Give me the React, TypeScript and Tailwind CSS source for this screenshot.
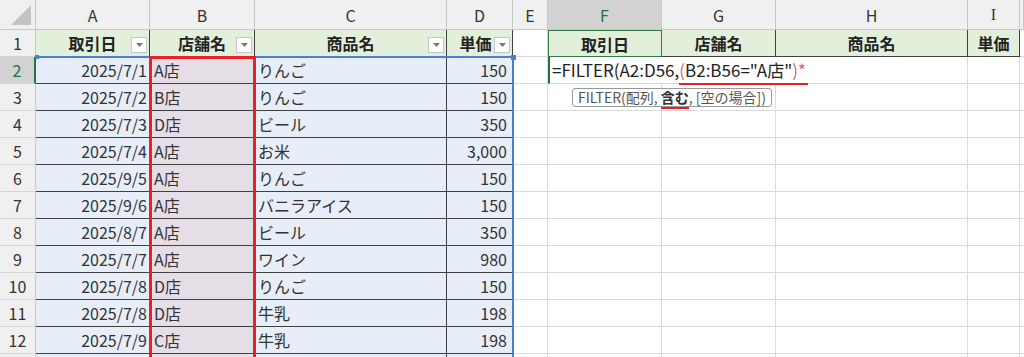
import React from 'react';

// Excel-like sheet: table A:D with a FILTER formula being typed in F2

const ROWS: [string, string, string, string][] = [
  ['2025/7/1', 'A店', 'りんご', '150'],
  ['2025/7/2', 'B店', 'りんご', '150'],
  ['2025/7/3', 'D店', 'ビール', '350'],
  ['2025/7/4', 'A店', 'お米', '3,000'],
  ['2025/9/5', 'A店', 'りんご', '150'],
  ['2025/9/6', 'A店', 'バニラアイス', '150'],
  ['2025/8/7', 'A店', 'ビール', '350'],
  ['2025/7/7', 'A店', 'ワイン', '980'],
  ['2025/7/8', 'D店', 'りんご', '150'],
  ['2025/7/8', 'D店', '牛乳', '198'],
  ['2025/7/9', 'C店', '牛乳', '198'],
  ['', '', '', ''],
];

const COLS = ['A', 'B', 'C', 'D', 'E', 'F', 'G', 'H', 'I', ''];

function FilterBtn() {
  return (
    <span className="absolute right-[2px] bottom-[3px] flex h-[16px] w-[16px] items-center justify-center border border-[#c6c6c6] bg-white">
      <svg width="7" height="4" viewBox="0 0 7 4">
        <path d="M0 0h7L3.5 4z" fill="#777" />
      </svg>
    </span>
  );
}

function RowHead({ n, active }: { n: number; active?: boolean }) {
  return (
    <div
      className={
        'flex h-[27px] items-center justify-center border-b border-[#d4d4d4] text-[16px] ' +
        (active
          ? 'bg-[#d2d2d2] text-[#217346] border-r-2 border-r-[#217346]'
          : 'bg-[#f0f0f0] text-[#333] border-r border-r-[#c8c8c8]')
      }
    >
      {n > 12 ? '' : n}
    </div>
  );
}

export default function App() {
  return (
    <div
      className="relative h-[357px] w-[1024px] overflow-hidden bg-white text-[#333]"
      style={{ fontFamily: '"Noto Sans CJK JP", "Noto Sans", sans-serif' }}
    >
      <div className="grid grid-cols-[36px_114px_105px_192px_66px_35px_114px_114px_192px_52px_1fr]">
        {/* column header row */}
        <div className="relative h-[30px] border-r border-b border-[#c8c8c8] bg-[#f0f0f0]">
          <svg className="absolute right-[4px] bottom-[4px]" width="20" height="20" viewBox="0 0 20 20">
            <path d="M20 0V20H0z" fill="#c3c3c3" />
          </svg>
        </div>
        {COLS.map((c, i) => (
          <div
            key={i}
            className={
              'flex h-[30px] items-center justify-center border-r border-b border-[#c8c8c8] text-[16px] ' +
              (c === 'F' ? 'bg-[#d2d2d2] text-[#217346]' : 'bg-[#f0f0f0] text-[#333]')
            }
          >
            {c === 'I' ? <span style={{ fontFamily: '"Liberation Serif", serif' }}>I</span> : c}
          </div>
        ))}

        {/* row 1 */}
        <RowHead n={1} />
        {['取引日', '店舗名', '商品名', '単価'].map((h) => (
          <div
            key={h}
            className="relative flex h-[27px] items-center justify-center border-r border-b border-[#404040] bg-[#e2efda] text-[16px] font-bold text-[#222]"
          >
            <span className={h === '単価' ? 'pr-[8px]' : ''}>{h}</span>
            <FilterBtn />
          </div>
        ))}
        <div className="h-[27px] border-r border-b border-[#dadada]" />
        {['取引日', '店舗名', '商品名', '単価'].map((h, i) => (
          <div
            key={'f' + h}
            className={
              'flex h-[27px] items-center justify-center bg-[#e2efda] text-[16px] font-bold text-[#222] ' +
              (i === 0
                ? 'border border-[#2f7a45]'
                : 'border-r border-b border-[#404040]')
            }
          >
            {h}
          </div>
        ))}
        <div className="h-[27px] border-b border-[#dadada]" />

        {/* data rows */}
        {ROWS.map((r, idx) => {
          const n = idx + 2;
          return (
            <React.Fragment key={n}>
              <RowHead n={n} active={n === 2} />
              <div className="flex h-[27px] items-center justify-end border-r border-b border-[#404040] bg-[#e8eef8] pr-[2px] text-[16px]">
                {r[0]}
              </div>
              <div className="flex h-[27px] items-center border-r border-b border-[#404040] bg-[#e5dee6] pl-[4px] text-[16px]">
                {r[1]}
              </div>
              <div className="flex h-[27px] items-center border-r border-b border-[#404040] bg-[#e8eef8] pl-[3px] text-[16px]">
                {r[2]}
              </div>
              <div className="flex h-[27px] items-center justify-end border-r border-b border-[#404040] bg-[#e8eef8] pr-[5px] text-[16px]">
                {r[3]}
              </div>
              <div className="h-[27px] border-r border-b border-[#dadada]" />
              {n === 2 ? (
                <div className="col-span-3 flex h-[27px] items-center overflow-visible whitespace-nowrap border-b border-r border-[#dadada] border-l-2 border-l-[#217346] pl-[2px] text-[17px] text-[#222]">
                  <span>=FILTER(A2:D56,</span>
                  <span className="relative">
                    <span className="text-[#e0607e]">(</span>
                    B2:B56="A店"
                    <span className="text-[#e0607e]">)*</span>
                    <span className="absolute left-0 right-[-2px] bottom-[-2px] h-[2px] bg-[#e8202a]" />
                  </span>
                </div>
              ) : (
                <>
                  <div className="h-[27px] border-r border-b border-[#dadada]" />
                  <div className="h-[27px] border-r border-b border-[#dadada]" />
                  <div className="h-[27px] border-r border-b border-[#dadada]" />
                </>
              )}
              <div className="h-[27px] border-r border-b border-[#dadada]" />
              <div className="h-[27px] border-b border-[#dadada]" />
            </React.Fragment>
          );
        })}
      </div>

      {/* selection outline A2:D... */}
      <div className="pointer-events-none absolute left-[36px] top-[56px] h-[320px] w-[478px] border-t-2 border-r-2 border-[#4a7fd6]" />
      <span className="absolute left-[35px] top-[55px] h-[4px] w-[4px] bg-[#4a7fd6]" />
      <span className="absolute left-[511px] top-[55px] h-[5px] w-[5px] bg-[#4a7fd6]" />

      {/* red emphasis box on column B */}
      <div className="pointer-events-none absolute left-[149px] top-[56px] h-[320px] w-[107px] border-[3px] border-[#e8202a]" />

      {/* function tooltip */}
      <div className="absolute left-[572px] top-[88px] flex h-[19px] items-center whitespace-nowrap rounded-[3px] border border-[#9a9a9a] bg-white px-[5px] text-[14px] text-[#555]">
        <span>FILTER(配列,&nbsp;</span>
        <span className="relative font-bold text-[#333]">
          含む
          <span className="absolute left-0 right-0 bottom-[-1px] h-[2px] bg-[#e8202a]" />
        </span>
        <span>,&nbsp;[空の場合])</span>
      </div>
    </div>
  );
}
